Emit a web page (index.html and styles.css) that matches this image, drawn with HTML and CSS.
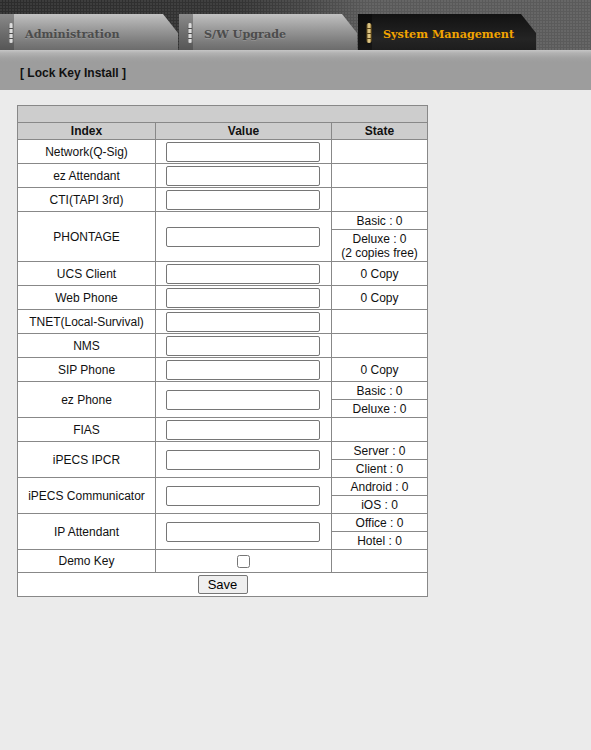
FILE: index.html
```html
<!DOCTYPE html>
<html>
<head>
<meta charset="utf-8">
<title>Lock Key Install</title>
<link rel="stylesheet" href="styles.css">
</head>
<body>
<div class="top">
  <div class="tabs">
    <div class="tab">
      <span class="strip"><svg class="grip" width="6" height="20" viewBox="0 0 6 20"><defs><linearGradient id="gs" x1="0" x2="1"><stop offset="0" stop-color="#6a6a6a"/><stop offset=".5" stop-color="#f6f6f6"/><stop offset="1" stop-color="#7a7a7a"/></linearGradient></defs><rect x="0.5" y="0" width="5" height="20" rx="2.5" fill="url(#gs)"/><path d="M1 5.5h4M1 10.5h4M1 15.5h4" stroke="#505050" stroke-width="1"/></svg></span>
      <span class="label">Administration</span>
    </div>
    <div class="tab">
      <span class="strip"><svg class="grip" width="6" height="20" viewBox="0 0 6 20"><rect x="0.5" y="0" width="5" height="20" rx="2.5" fill="url(#gs)"/><path d="M1 5.5h4M1 10.5h4M1 15.5h4" stroke="#505050" stroke-width="1"/></svg></span>
      <span class="label">S/W Upgrade</span>
    </div>
    <div class="tab active">
      <span class="strip"><svg class="grip" width="6" height="20" viewBox="0 0 6 20"><defs><linearGradient id="gg" x1="0" x2="1"><stop offset="0" stop-color="#6b5420"/><stop offset=".5" stop-color="#f3dc9a"/><stop offset="1" stop-color="#8a6a28"/></linearGradient></defs><rect x="0.5" y="0" width="5" height="20" rx="2.5" fill="url(#gg)"/><path d="M1 5.5h4M1 10.5h4M1 15.5h4" stroke="#5a4418" stroke-width="1"/></svg></span>
      <span class="label">System Management</span>
    </div>
  </div>
</div>
<div class="subbar">[ Lock Key Install ]</div>
<div class="content">
  <table class="lk">
    <colgroup><col class="c-index"><col class="c-value"><col class="c-state"></colgroup>
    <tr class="cap"><td colspan="3"></td></tr>
    <tr class="head"><th>Index</th><th>Value</th><th>State</th></tr>
    <tr><td>Network(Q-Sig)</td><td><input class="key" type="text"></td><td></td></tr>
    <tr><td>ez Attendant</td><td><input class="key" type="text"></td><td></td></tr>
    <tr><td>CTI(TAPI 3rd)</td><td><input class="key" type="text"></td><td></td></tr>
    <tr class="sub"><td rowspan="2">PHONTAGE</td><td rowspan="2"><input class="key" type="text"></td><td>Basic : 0</td></tr>
    <tr class="sub2"><td>Deluxe : 0<br>(2 copies free)</td></tr>
    <tr><td>UCS Client</td><td><input class="key" type="text"></td><td>0 Copy</td></tr>
    <tr><td>Web Phone</td><td><input class="key" type="text"></td><td>0 Copy</td></tr>
    <tr><td>TNET(Local-Survival)</td><td><input class="key" type="text"></td><td></td></tr>
    <tr><td>NMS</td><td><input class="key" type="text"></td><td></td></tr>
    <tr><td>SIP Phone</td><td><input class="key" type="text"></td><td>0 Copy</td></tr>
    <tr class="sub"><td rowspan="2">ez Phone</td><td rowspan="2"><input class="key" type="text"></td><td>Basic : 0</td></tr>
    <tr class="sub"><td>Deluxe : 0</td></tr>
    <tr><td>FIAS</td><td><input class="key" type="text"></td><td></td></tr>
    <tr class="sub"><td rowspan="2">iPECS IPCR</td><td rowspan="2"><input class="key" type="text"></td><td>Server : 0</td></tr>
    <tr class="sub"><td>Client : 0</td></tr>
    <tr class="sub"><td rowspan="2">iPECS Communicator</td><td rowspan="2"><input class="key" type="text"></td><td>Android : 0</td></tr>
    <tr class="sub"><td>iOS : 0</td></tr>
    <tr class="sub"><td rowspan="2">IP Attendant</td><td rowspan="2"><input class="key" type="text"></td><td>Office : 0</td></tr>
    <tr class="sub"><td>Hotel : 0</td></tr>
    <tr class="demo"><td>Demo Key</td><td><input class="chk" type="checkbox"></td><td></td></tr>
    <tr class="save"><td colspan="3"><button class="btn" type="button">Save</button></td></tr>
  </table>
</div>
</body>
</html>
```
FILE: styles.css
```css
html, body {
  margin: 0;
  padding: 0;
}
body {
  background: #ebebeb;
  font-family: "Liberation Sans", Arial, sans-serif;
  font-size: 12px;
  color: #111;
  min-height: 750px;
}
.top {
  height: 50px;
  box-sizing: border-box;
  padding-top: 14px;
  background-color: #333;
  background-image:
    radial-gradient(circle at 1px 1px, rgba(255,255,255,0.07) 0.8px, transparent 1.2px),
    linear-gradient(to right, #2c2c2c 0%, #333 40%, #454545 52%, #595959 62%, #5b5b5b 100%);
  background-size: 3px 3px, 100% 100%;
}
.tabs {
  display: flex;
  gap: 1px;
  height: 36px;
}
.tab {
  width: 178px;
  height: 36px;
  display: flex;
  align-items: center;
  background: linear-gradient(#c2c2c2 0%, #b0b0b0 18%, #939393 50%, #7a7a7a 80%, #6c6c6c 100%);
  clip-path: polygon(0 0, calc(100% - 15px) 0, 100% 19px, 100% 100%, 0 100%);
}
.strip {
  width: 14px;
  height: 36px;
  box-sizing: border-box;
  padding-left: 8px;
  display: flex;
  align-items: center;
  background: linear-gradient(#8a8a8a 0%, #6e6e6e 50%, #565656 100%);
}
.grip {
  display: block;
  margin-top: 2px;
}
.label {
  margin-left: 11px;
  margin-top: 3px;
  font-family: "DejaVu Serif", "Liberation Serif", serif;
  font-weight: bold;
  font-size: 11.2px;
  color: #4c4c4c;
  text-shadow: 0 1px 0 rgba(255,255,255,0.15);
  white-space: nowrap;
}
.tab.active {
  background: linear-gradient(#121212 0%, #1c1c1c 40%, #242424 70%, #1d1d1d 100%);
}
.tab.active .strip {
  background: linear-gradient(#0c0c0c, #161616);
}
.tab.active .label {
  color: #f2a400;
  text-shadow: none;
}
.subbar {
  height: 40px;
  box-sizing: border-box;
  padding: 16px 0 0 20px;
  background: linear-gradient(#c6c6c6 0px, #b2b2b2 3px, #a2a2a2 8px, #9d9d9d 12px, #9d9d9d 100%);
  font-weight: bold;
  font-size: 12px;
  color: #111;
}
.content {
  padding: 15px 17px;
}
.lk {
  border-collapse: collapse;
  table-layout: fixed;
  width: 410px;
  background: #fff;
  border: 1px solid #888;
}
.c-index { width: 138px; }
.c-value { width: 176px; }
.c-state { width: 96px; }
.lk td, .lk th {
  border: 1px solid #888;
  padding: 0;
  height: 23px;
  text-align: center;
  vertical-align: middle;
  font-size: 12px;
}
.lk tr.cap td {
  height: 16px;
  background: #cdcdcd;
}
.lk tr.head th {
  height: 16px;
  background: #cdcdcd;
  font-weight: bold;
  color: #111;
}
.lk tr.sub td {
  height: 17px;
}
.lk tr.sub2 td {
  height: 31px;
}
.lk tr.demo td {
  height: 22px;
}
.key {
  display: block;
  margin: 0 0 0 10px;
  width: 154px;
  height: 20px;
  box-sizing: border-box;
  border: 1px solid #767676;
  border-radius: 2px;
  padding: 0 2px;
  background: #fff;
  font-family: "Liberation Sans", Arial, sans-serif;
  font-size: 12px;
}
.chk {
  width: 13px;
  height: 13px;
  margin: 0;
  vertical-align: middle;
}
.btn {
  width: 50px;
  height: 19px;
  padding: 0;
  background: #efefef;
  border: 1px solid #767676;
  border-radius: 2px;
  font-family: "Liberation Sans", Arial, sans-serif;
  font-size: 13px;
  color: #000;
  vertical-align: middle;
}
```
